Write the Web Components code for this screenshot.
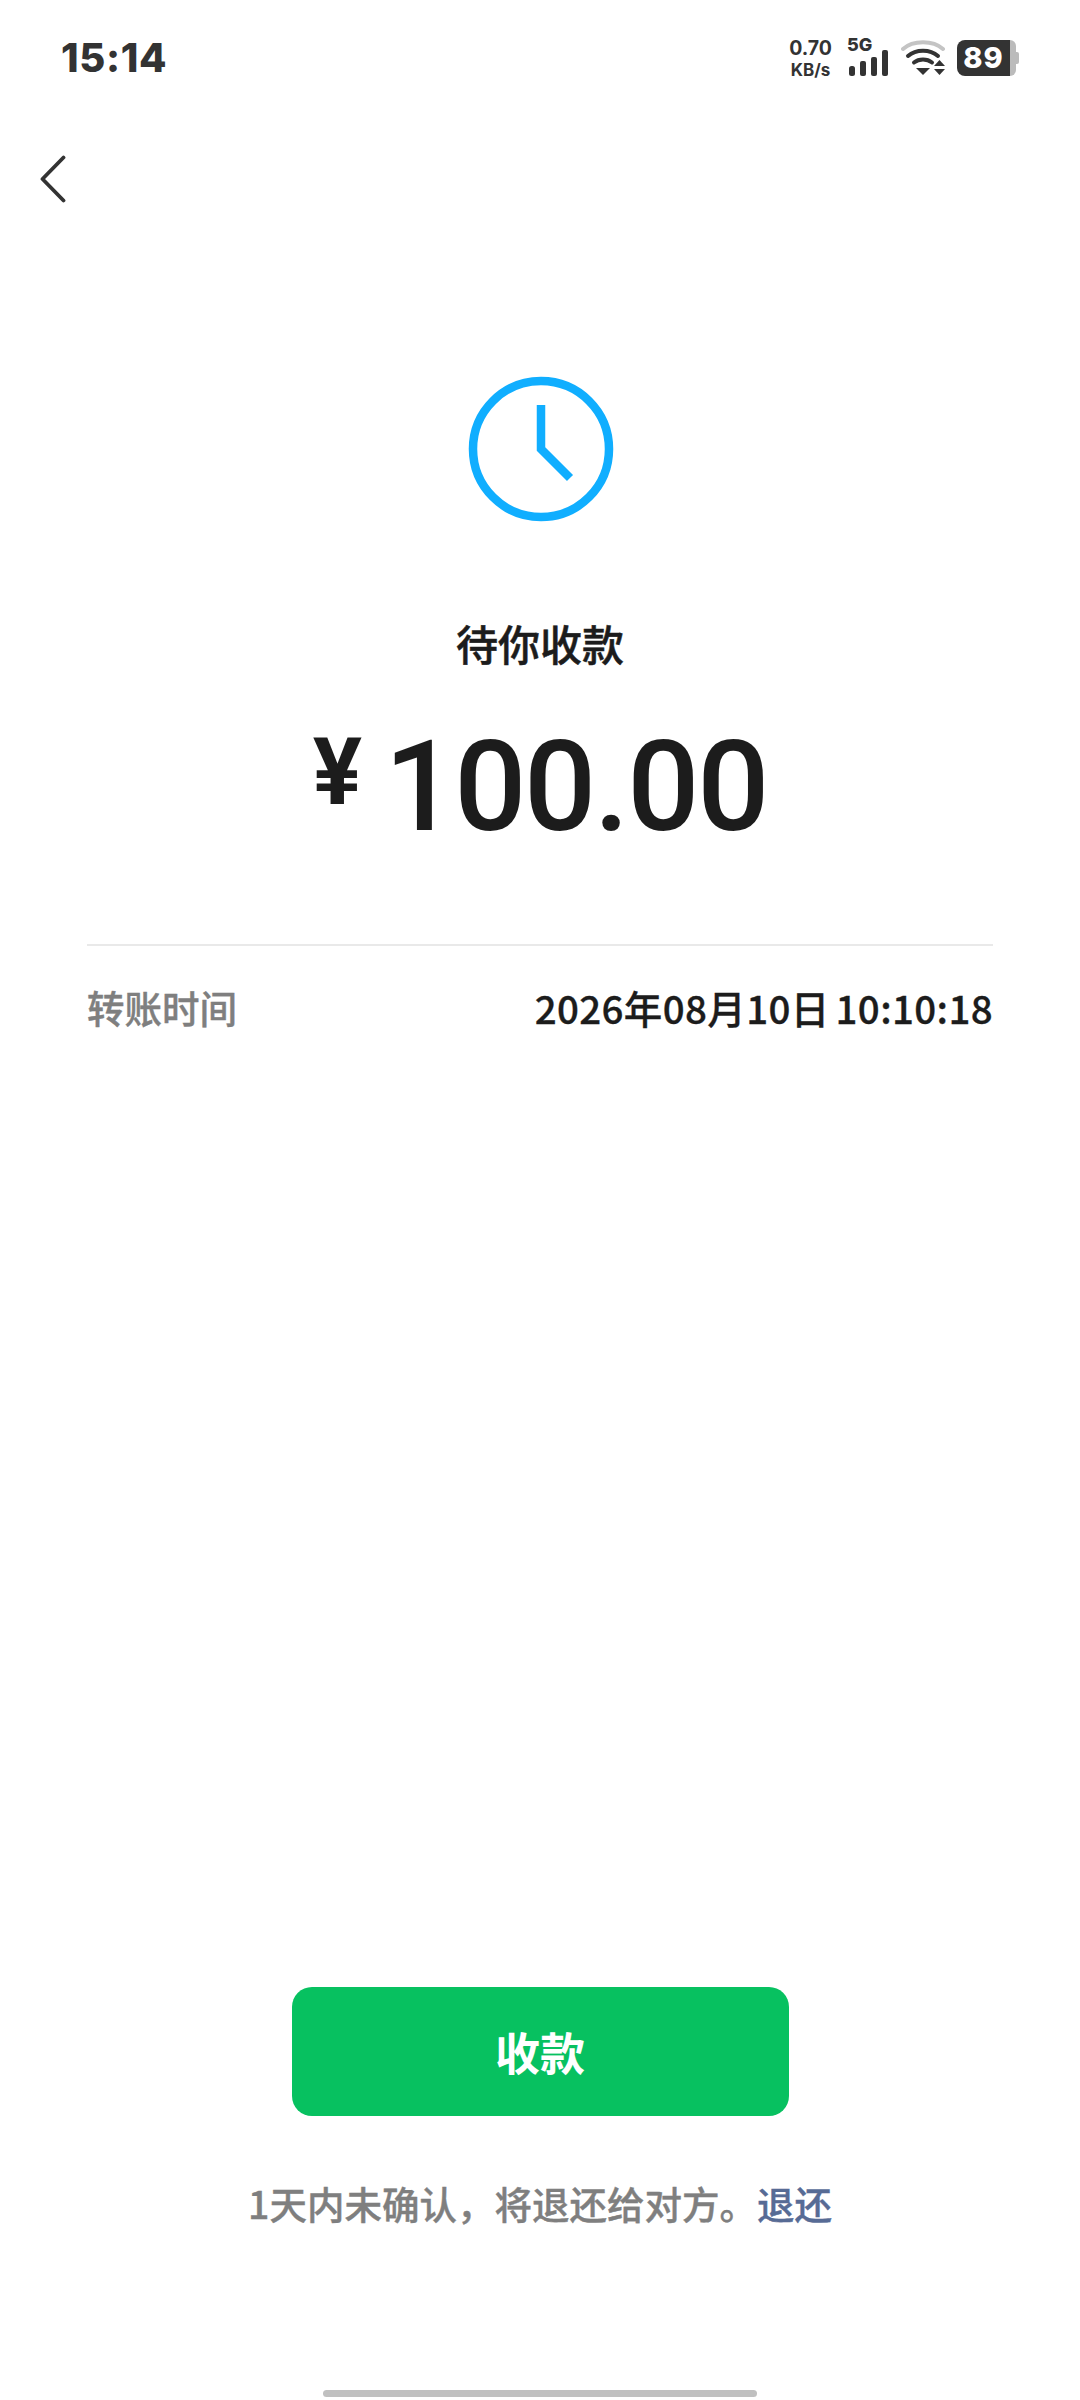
<!DOCTYPE html>
<html lang="zh">
<head>
<meta charset="utf-8">
<title>待你收款</title>
<style>
  html, body { margin: 0; padding: 0; background: #fff; }
  body { width: 1080px; height: 2400px; overflow: hidden; font-family: "Noto Sans CJK SC", Roboto, sans-serif; }
</style>
</head>
<body>
<transfer-page>
  <status-bar slot="top" time="15:14" speed="0.70" network="5G" battery="89"></status-bar>
  <nav-back slot="top"></nav-back>
  <transfer-summary slot="top" title="待你收款" amount="100.00"></transfer-summary>
  <detail-row slot="top" label="转账时间">2026年08月10日<span style="margin-left:6px">10:10:18</span></detail-row>
  <primary-button slot="bottom">收款</primary-button>
  <refund-note slot="bottom" link="退还">1天内未确认，将退还给对方。</refund-note>
</transfer-page>

<script>
const CJK = '"Noto Sans CJK SC", sans-serif';

class TransferPage extends HTMLElement {
  connectedCallback () {
    this.attachShadow( { mode: 'open' } );
    this.shadowRoot.innerHTML = /*html*/`
    <style>
      :host { display: flex; flex-direction: column; height: 2400px; background: #fff; }
      .top { flex: 1; display: flex; flex-direction: column; }
      .bottom { display: flex; flex-direction: column; align-items: center; }
      .home { height: 7px; width: 434px; margin: 0 auto 3px; background: #c0c0c0; border-radius: 3.5px; }
    </style>
    <div class="top"><slot name="top"></slot></div>
    <div class="bottom"><slot name="bottom"></slot></div>
    <div class="home"></div>
    `;
  }
}

class StatusBar extends HTMLElement {
  connectedCallback () {
    this.attachShadow( { mode: 'open' } );
    this.shadowRoot.innerHTML = /*html*/`
    <style>
      :host { display: flex; align-items: center; height: 116px; box-sizing: border-box; padding: 0 61px; color: #333; font-family: Inter, Roboto, sans-serif; }
      .time { font-size: 40px; font-weight: 800; letter-spacing: .6px; line-height: 48px; flex: 1; }
      .icons { display: flex; align-items: center; }
      .speed { margin-right: 14px; text-align: center; font-weight: 700; }
      .speed div:first-child { font-size: 19.5px; line-height: 24px; }
      .speed div:last-child { font-size: 17px; line-height: 21px; }
      svg { display: block; }
      .net { position: relative; margin-right: 11px; }
      .net span { position: absolute; left: 1px; top: -5px; font-size: 18px; font-weight: 800; line-height: 22px; }
      .battery { display: flex; margin-left: 10px; align-items: center; }
      .cell { width: 53px; height: 36px; background: #333; border-radius: 8px 0 0 8px; color: #fff; font-size: 29px; font-weight: 800; line-height: 36px; text-align: center; letter-spacing: 1px; }
      .rest { width: 6px; height: 36px; background: #bbb; border-radius: 0 6px 6px 0; }
      .tip { width: 3px; height: 12px; background: #bbb; border-radius: 0 2px 2px 0; }
    </style>
    <div class="time">${ this.getAttribute( 'time' ) }</div>
    <div class="icons">
      <div class="speed"><div>${ this.getAttribute( 'speed' ) }</div><div>KB/s</div></div>
      <div class="net">
        <span>${ this.getAttribute( 'network' ) }</span>
        <svg width="44" height="38" viewBox="0 0 44 38">
          <rect x="3" y="27" width="6" height="10" rx="2.5" fill="#333"/>
          <rect x="14" y="22" width="6" height="15" rx="2" fill="#333"/>
          <rect x="25" y="18" width="6" height="19" rx="2" fill="#333"/>
          <rect x="36" y="11" width="6" height="26" rx="2" fill="#333"/>
        </svg>
      </div>
      <svg width="46" height="38" viewBox="0 0 46 38">
        <path d="M2 10C12 1 32 1 42 10" fill="none" stroke="#c4c4c4" stroke-width="4" stroke-linecap="round"/>
        <path d="M7 17C15 10 29 10 37 17" fill="none" stroke="#333" stroke-width="4" stroke-linecap="round"/>
        <path d="M13 23.500C18 19.500 26 19.500 31 23.500" fill="none" stroke="#333" stroke-width="4" stroke-linecap="round"/>
        <path d="M15 29H29L22 36Z" fill="#333"/>
        <path d="M33 27L38.500 21L44 27Z" fill="#333"/>
        <path d="M33 30H44L38.500 36Z" fill="#333"/>
      </svg>
      <div class="battery">
        <div class="cell">${ this.getAttribute( 'battery' ) }</div><div class="rest"></div><div class="tip"></div>
      </div>
    </div>
    `;
  }
}

class NavBack extends HTMLElement {
  connectedCallback () {
    this.attachShadow( { mode: 'open' } );
    this.shadowRoot.innerHTML = /*html*/`
    <style>
      :host { display: block; height: 112px; padding-left: 40px; }
      svg { display: block; padding-top: 39px; }
    </style>
    <svg width="26" height="48" viewBox="0 0 26 48">
      <path d="M23.500 2.500L2.500 24L23.500 45.500" fill="none" stroke="#333" stroke-width="3.800" stroke-linecap="round" stroke-linejoin="round"/>
    </svg>
    `;
  }
}

class TransferSummary extends HTMLElement {
  connectedCallback () {
    this.attachShadow( { mode: 'open' } );
    this.shadowRoot.innerHTML = /*html*/`
    <style>
      :host { display: flex; flex-direction: column; align-items: center; color: #1c1c1c; }
      svg { display: block; margin-top: 148px; }
      .title { margin-top: 90px; font: 500 42px/62px ${ CJK }; -webkit-text-stroke: .5px #1c1c1c; }
      .amount { display: flex; align-items: flex-start; margin-top: 48px; height: 130px; line-height: 130px; font-family: Roboto, sans-serif; font-weight: 500; font-size: 127px; letter-spacing: -2.2px; }
      .yen { font-size: 92px; font-weight: 700; line-height: 102px; margin-right: 22px; letter-spacing: 0; }
    </style>
    <svg width="146" height="146" viewBox="0 0 146 146" style="transform:translateX(1px)">
      <circle cx="73" cy="73" r="68" fill="none" stroke="#10aeff" stroke-width="8.500"/>
      <path d="M73 29V73L102 102" fill="none" stroke="#10aeff" stroke-width="8.500"/>
    </svg>
    <div class="title">${ this.getAttribute( 'title' ) }</div>
    <div class="amount"><span class="yen">¥</span><span>${ this.getAttribute( 'amount' ) }</span></div>
    `;
  }
}

class DetailRow extends HTMLElement {
  connectedCallback () {
    this.attachShadow( { mode: 'open' } );
    this.shadowRoot.innerHTML = /*html*/`
    <style>
      :host { display: flex; justify-content: space-between; align-items: center; margin: 92px 87px 0; height: 122px; border-top: 2px solid #e9e9e9; font: 500 37.500px/54px ${ CJK }; }
      .label { color: #7f7f7f; -webkit-text-stroke: .4px #7f7f7f; }
      .value { color: #1c1c1c; font-weight: 500; font-size: 38.5px; letter-spacing: .35px; -webkit-text-stroke: .3px #1c1c1c; }
    </style>
    <div class="label">${ this.getAttribute( 'label' ) }</div>
    <div class="value"><slot></slot></div>
    `;
  }
}

class PrimaryButton extends HTMLElement {
  connectedCallback () {
    this.attachShadow( { mode: 'open' } );
    this.shadowRoot.innerHTML = /*html*/`
    <style>
      :host { display: flex; align-items: center; justify-content: center; width: 497px; height: 129px; margin-top: 1px; background: #07c160; border-radius: 20px; color: #fff; font: 700 45px/1 ${ CJK }; }
    </style>
    <slot></slot>
    `;
  }
}

class RefundNote extends HTMLElement {
  connectedCallback () {
    this.attachShadow( { mode: 'open' } );
    this.shadowRoot.innerHTML = /*html*/`
    <style>
      :host { display: block; margin: 60px 0 160px; color: #7f7f7f; font: 500 37.5px/54px ${ CJK }; white-space: nowrap; -webkit-text-stroke: .4px #7f7f7f; }
      .link { color: #576b95; font-weight: 500; -webkit-text-stroke: .4px #576b95; }
    </style>
    <slot></slot><span class="link">${ this.getAttribute( 'link' ) }</span>
    `;
  }
}

customElements.define( 'transfer-page', TransferPage );
customElements.define( 'status-bar', StatusBar );
customElements.define( 'nav-back', NavBack );
customElements.define( 'transfer-summary', TransferSummary );
customElements.define( 'detail-row', DetailRow );
customElements.define( 'primary-button', PrimaryButton );
customElements.define( 'refund-note', RefundNote );
</script>
</body>
</html>
